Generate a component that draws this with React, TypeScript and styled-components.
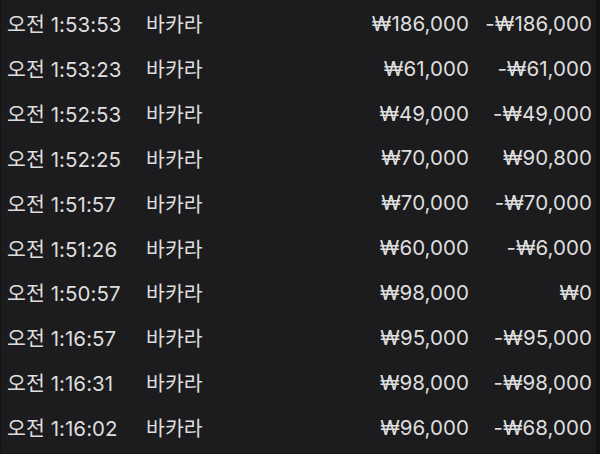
import React from "react";
import styled, { createGlobalStyle } from "styled-components";

const Global = createGlobalStyle`
  html, body { margin: 0; padding: 0; background: #1c1c1e; }
  body { width: 600px; height: 454px; overflow: hidden; }
`;

const Screen = styled.div`
  width: 600px;
  height: 454px;
  box-sizing: border-box;
  padding-top: 1px;
  background: #1c1c1e;
  border-left: 1px solid #141414;
  border-right: 4px solid #121212;
  font-family: Inter, "Noto Sans CJK KR", sans-serif;
  color: #dedede;
  overflow: hidden;
`;

const Row = styled.div`
  display: grid;
  grid-template-columns: 139px 1fr 123px 123px;
  align-items: center;
  height: 44.85px;
  padding: 0 4px 0 6px;
  font-size: 20.5px;
  letter-spacing: 0.05px;
`;

const Time = styled.span`
  white-space: nowrap;
`;

const Game = styled.span`
  white-space: nowrap;
`;

const Amount = styled.span`
  text-align: right;
  white-space: nowrap;
`;

const data = [
  ["오전 1:53:53", "바카라", "₩186,000", "-₩186,000"],
  ["오전 1:53:23", "바카라", "₩61,000", "-₩61,000"],
  ["오전 1:52:53", "바카라", "₩49,000", "-₩49,000"],
  ["오전 1:52:25", "바카라", "₩70,000", "₩90,800"],
  ["오전 1:51:57", "바카라", "₩70,000", "-₩70,000"],
  ["오전 1:51:26", "바카라", "₩60,000", "-₩6,000"],
  ["오전 1:50:57", "바카라", "₩98,000", "₩0"],
  ["오전 1:16:57", "바카라", "₩95,000", "-₩95,000"],
  ["오전 1:16:31", "바카라", "₩98,000", "-₩98,000"],
  ["오전 1:16:02", "바카라", "₩96,000", "-₩68,000"],
];

export default function App() {
  return (
    <>
      <Global />
      <Screen>
        {data.map((r, i) => (
          <Row key={i}>
            <Time>{r[0]}</Time>
            <Game>{r[1]}</Game>
            <Amount>{r[2]}</Amount>
            <Amount>{r[3]}</Amount>
          </Row>
        ))}
      </Screen>
    </>
  );
}
